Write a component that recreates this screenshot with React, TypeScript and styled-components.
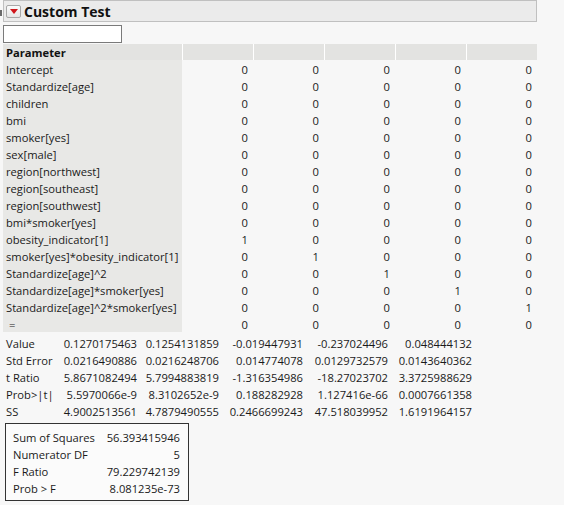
import React from "react";
import styled, { createGlobalStyle } from "styled-components";

const Global = createGlobalStyle`
  html, body { margin: 0; padding: 0; background: #f7f7f7; }
  body { font-family: "Segoe UI", "Open Sans", "Noto Sans", sans-serif; font-size: 11.2px; color: #1a1a1a; }
`;

const Page = styled.div`
  width: 564px;
  height: 505px;
  background: #f7f7f7;
  overflow: hidden;
`;

const HeaderRow = styled.div`
  display: flex;
  align-items: flex-start;
`;

const Marker = styled.div`
  width: 2px;
  height: 6px;
  margin-top: 10px;
  margin-right: 1px;
  background: #6a6a6a;
`;

const HeaderBar = styled.div`
  width: 532px;
  height: 20px;
  background: #ebebeb;
  border: 1px solid #c0c0c0;
  display: flex;
  align-items: center;
  gap: 3px;
`;

const Disclosure = styled.div`
  width: 13px;
  height: 11px;
  margin-left: 2px;
  border: 1px solid #a8a8a8;
  border-radius: 2px;
  background: linear-gradient(#fbfbfb, #e6e6e6);
  display: flex;
  align-items: center;
  justify-content: center;
`;

const Title = styled.div`
  font-weight: 700;
  font-size: 14px;
  color: #111;
  line-height: 20px;
  padding-top: 1px;
`;

const SearchBox = styled.input`
  display: block;
  box-sizing: border-box;
  margin: 3px 0 0 3px;
  width: 119px;
  height: 18px;
  padding: 0;
  border: 1px solid #7a7a7a;
  background: #fff;
  outline: none;
`;

const Grid = styled.div`
  display: grid;
  grid-template-columns: 179px repeat(5, 71px);
  margin-left: 3px;
  margin-top: 1px;
`;

const HeadCell = styled.div<{ $first?: boolean }>`
  box-sizing: border-box;
  height: 16px;
  line-height: 16px;
  padding-top: 1px;
  background: #e3e3e1;
  border-left: ${(p) => (p.$first ? "none" : "1px solid #ffffff")};
  padding-left: 3px;
  font-weight: 700;
  color: #111;
`;

const ParamCell = styled.div`
  box-sizing: border-box;
  height: 17px;
  line-height: 17px;
  padding-top: 1px;
  background: #e8e8e6;
  padding-left: 3px;
  white-space: nowrap;
`;

const NumCell = styled.div`
  box-sizing: border-box;
  height: 17px;
  line-height: 17px;
  padding-top: 1px;
  text-align: right;
  padding-right: 5px;
`;

const StatsGrid = styled.div`
  display: grid;
  grid-template-columns: 56px 78px 82px 84px 85px 84px;
  margin-left: 3px;
  margin-top: 2px;
`;

const StatLabel = styled.div`
  box-sizing: border-box;
  height: 17px;
  line-height: 17px;
  padding-top: 1px;
  padding-left: 3px;
  white-space: nowrap;
`;

const StatNum = styled.div`
  box-sizing: border-box;
  height: 17px;
  line-height: 17px;
  padding-top: 1px;
  text-align: right;
  white-space: nowrap;
`;

const SummaryBox = styled.div`
  box-sizing: border-box;
  margin: 4px 0 0 5px;
  width: 184px;
  height: 78px;
  padding: 4px 8px 4px 7px;
  border: 1px solid #333;
  background: #fbfbfb;
  display: grid;
  grid-template-columns: 1fr auto;
  align-content: start;
`;

const SumLabel = styled.div`
  box-sizing: border-box;
  height: 17px;
  line-height: 17px;
  padding-top: 1px;
  white-space: nowrap;
`;

const SumValue = styled.div`
  box-sizing: border-box;
  height: 17px;
  line-height: 17px;
  padding-top: 1px;
  text-align: right;
  white-space: nowrap;
`;

const params = [
  "Intercept",
  "Standardize[age]",
  "children",
  "bmi",
  "smoker[yes]",
  "sex[male]",
  "region[northwest]",
  "region[southeast]",
  "region[southwest]",
  "bmi*smoker[yes]",
  "obesity_indicator[1]",
  "smoker[yes]*obesity_indicator[1]",
  "Standardize[age]^2",
  "Standardize[age]*smoker[yes]",
  "Standardize[age]^2*smoker[yes]",
  " =",
];

const onesAt: Record<string, number> = {
  "obesity_indicator[1]": 0,
  "smoker[yes]*obesity_indicator[1]": 1,
  "Standardize[age]^2": 2,
  "Standardize[age]*smoker[yes]": 3,
  "Standardize[age]^2*smoker[yes]": 4,
};

const stats: [string, string[]][] = [
  ["Value", ["0.1270175463", "0.1254131859", "-0.019447931", "-0.237024496", "0.048444132"]],
  ["Std Error", ["0.0216490886", "0.0216248706", "0.014774078", "0.0129732579", "0.0143640362"]],
  ["t Ratio", ["5.8671082494", "5.7994883819", "-1.316354986", "-18.27023702", "3.3725988629"]],
  ["Prob>|t|", ["5.5970066e-9", "8.3102652e-9", "0.188282928", "1.127416e-66", "0.0007661358"]],
  ["SS", ["4.9002513561", "4.7879490555", "0.2466699243", "47.518039952", "1.6191964157"]],
];

const summary: [string, string][] = [
  ["Sum of Squares", "56.393415946"],
  ["Numerator DF", "5"],
  ["F Ratio", "79.229742139"],
  ["Prob > F", "8.081235e-73"],
];

export default function App() {
  return (
    <Page>
      <Global />
      <HeaderRow>
        <Marker />
        <HeaderBar>
          <Disclosure>
            <svg width="8" height="5" viewBox="0 0 8 5">
              <path d="M0 0 L8 0 L4 5 Z" fill="#d0161b" />
            </svg>
          </Disclosure>
          <Title>Custom Test</Title>
        </HeaderBar>
      </HeaderRow>
      <SearchBox />
      <Grid>
        <HeadCell $first>Parameter</HeadCell>
        {[0, 1, 2, 3, 4].map((i) => (
          <HeadCell key={i} />
        ))}
        {params.map((p) => (
          <React.Fragment key={p}>
            <ParamCell>{p === " =" ? "\u00a0=" : p}</ParamCell>
            {[0, 1, 2, 3, 4].map((i) => (
              <NumCell key={i}>{onesAt[p] === i ? "1" : "0"}</NumCell>
            ))}
          </React.Fragment>
        ))}
      </Grid>
      <StatsGrid>
        {stats.map(([label, vals]) => (
          <React.Fragment key={label}>
            <StatLabel>{label}</StatLabel>
            {vals.map((v, i) => (
              <StatNum key={i}>{v}</StatNum>
            ))}
          </React.Fragment>
        ))}
      </StatsGrid>
      <SummaryBox>
        {summary.map(([l, v]) => (
          <React.Fragment key={l}>
            <SumLabel>{l}</SumLabel>
            <SumValue>{v}</SumValue>
          </React.Fragment>
        ))}
      </SummaryBox>
    </Page>
  );
}
